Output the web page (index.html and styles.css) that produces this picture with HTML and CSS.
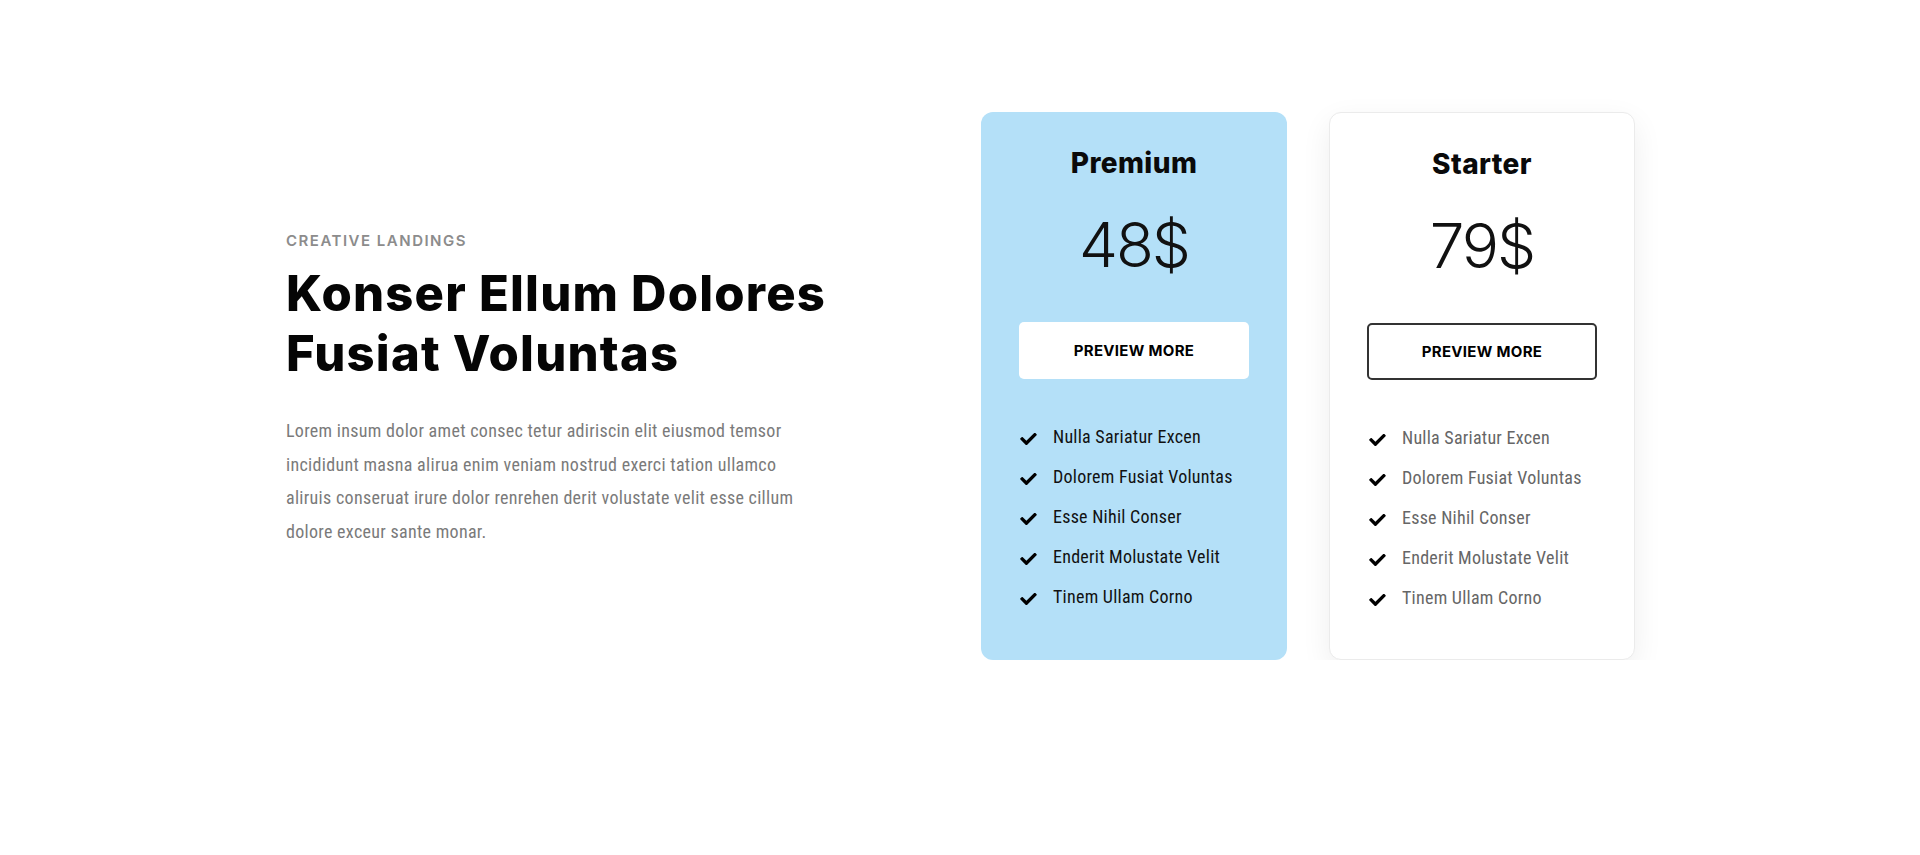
FILE: index.html
```html
<!DOCTYPE html>
<html lang="en">
<head>
<meta charset="utf-8">
<title>Pricing</title>
<link rel="stylesheet" href="styles.css">
</head>
<body>
<section class="pricing">
  <div class="container">
    <div class="intro">
      <div class="eyebrow">CREATIVE LANDINGS</div>
      <h1 class="title">Konser Ellum Dolores<br>Fusiat Voluntas</h1>
      <p class="text">Lorem insum dolor amet consec tetur adiriscin elit eiusmod temsor incididunt masna alirua enim veniam nostrud exerci tation ullamco aliruis conseruat irure dolor renrehen derit volustate velit esse cillum dolore exceur sante monar.</p>
    </div>
    <div class="plans">
      <div class="plan plan-featured">
        <h3 class="plan-name">Premium</h3>
        <div class="plan-price">48$</div>
        <a class="plan-btn" href="#">PREVIEW MORE</a>
        <ul class="plan-list">
          <li><svg class="check" viewBox="0 0 512 370"><path d="M173.9 366.4l-166.4-166.4c-10-10-10-26.2 0-36.2l36.2-36.2c10-10 26.2-10 36.2 0L192 239.7 432.1-.4c10-10 26.2-10 36.2 0l36.2 36.2c10 10 10 26.2 0 36.2l-294.4 294.4c-10 10-26.2 10-36.2 0z"/></svg>Nulla Sariatur Excen</li>
          <li><svg class="check" viewBox="0 0 512 370"><path d="M173.9 366.4l-166.4-166.4c-10-10-10-26.2 0-36.2l36.2-36.2c10-10 26.2-10 36.2 0L192 239.7 432.1-.4c10-10 26.2-10 36.2 0l36.2 36.2c10 10 10 26.2 0 36.2l-294.4 294.4c-10 10-26.2 10-36.2 0z"/></svg>Dolorem Fusiat Voluntas</li>
          <li><svg class="check" viewBox="0 0 512 370"><path d="M173.9 366.4l-166.4-166.4c-10-10-10-26.2 0-36.2l36.2-36.2c10-10 26.2-10 36.2 0L192 239.7 432.1-.4c10-10 26.2-10 36.2 0l36.2 36.2c10 10 10 26.2 0 36.2l-294.4 294.4c-10 10-26.2 10-36.2 0z"/></svg>Esse Nihil Conser</li>
          <li><svg class="check" viewBox="0 0 512 370"><path d="M173.9 366.4l-166.4-166.4c-10-10-10-26.2 0-36.2l36.2-36.2c10-10 26.2-10 36.2 0L192 239.7 432.1-.4c10-10 26.2-10 36.2 0l36.2 36.2c10 10 10 26.2 0 36.2l-294.4 294.4c-10 10-26.2 10-36.2 0z"/></svg>Enderit Molustate Velit</li>
          <li><svg class="check" viewBox="0 0 512 370"><path d="M173.9 366.4l-166.4-166.4c-10-10-10-26.2 0-36.2l36.2-36.2c10-10 26.2-10 36.2 0L192 239.7 432.1-.4c10-10 26.2-10 36.2 0l36.2 36.2c10 10 10 26.2 0 36.2l-294.4 294.4c-10 10-26.2 10-36.2 0z"/></svg>Tinem Ullam Corno</li>
        </ul>
      </div>
      <div class="plan plan-basic">
        <h3 class="plan-name">Starter</h3>
        <div class="plan-price">79$</div>
        <a class="plan-btn" href="#">PREVIEW MORE</a>
        <ul class="plan-list">
          <li><svg class="check" viewBox="0 0 512 370"><path d="M173.9 366.4l-166.4-166.4c-10-10-10-26.2 0-36.2l36.2-36.2c10-10 26.2-10 36.2 0L192 239.7 432.1-.4c10-10 26.2-10 36.2 0l36.2 36.2c10 10 10 26.2 0 36.2l-294.4 294.4c-10 10-26.2 10-36.2 0z"/></svg>Nulla Sariatur Excen</li>
          <li><svg class="check" viewBox="0 0 512 370"><path d="M173.9 366.4l-166.4-166.4c-10-10-10-26.2 0-36.2l36.2-36.2c10-10 26.2-10 36.2 0L192 239.7 432.1-.4c10-10 26.2-10 36.2 0l36.2 36.2c10 10 10 26.2 0 36.2l-294.4 294.4c-10 10-26.2 10-36.2 0z"/></svg>Dolorem Fusiat Voluntas</li>
          <li><svg class="check" viewBox="0 0 512 370"><path d="M173.9 366.4l-166.4-166.4c-10-10-10-26.2 0-36.2l36.2-36.2c10-10 26.2-10 36.2 0L192 239.7 432.1-.4c10-10 26.2-10 36.2 0l36.2 36.2c10 10 10 26.2 0 36.2l-294.4 294.4c-10 10-26.2 10-36.2 0z"/></svg>Esse Nihil Conser</li>
          <li><svg class="check" viewBox="0 0 512 370"><path d="M173.9 366.4l-166.4-166.4c-10-10-10-26.2 0-36.2l36.2-36.2c10-10 26.2-10 36.2 0L192 239.7 432.1-.4c10-10 26.2-10 36.2 0l36.2 36.2c10 10 10 26.2 0 36.2l-294.4 294.4c-10 10-26.2 10-36.2 0z"/></svg>Enderit Molustate Velit</li>
          <li><svg class="check" viewBox="0 0 512 370"><path d="M173.9 366.4l-166.4-166.4c-10-10-10-26.2 0-36.2l36.2-36.2c10-10 26.2-10 36.2 0L192 239.7 432.1-.4c10-10 26.2-10 36.2 0l36.2 36.2c10 10 10 26.2 0 36.2l-294.4 294.4c-10 10-26.2 10-36.2 0z"/></svg>Tinem Ullam Corno</li>
        </ul>
      </div>
    </div>
  </div>
</section>
</body>
</html>
```
FILE: styles.css
```css
* { box-sizing: border-box; }
html, body { margin: 0; padding: 0; background: #fff; }
body { font-family: "Roboto Condensed", "Liberation Sans Narrow", Roboto, sans-serif; color: #111; }

.pricing { padding-top: 112px; }
.container {
  width: 1350px;
  margin: 0 auto;
  display: flex;
  align-items: flex-start;
  justify-content: space-between;
  padding-left: 1px;
}

.intro { width: 600px; padding-top: 117px; }
.eyebrow {
  font-family: Inter, sans-serif;
  font-weight: 600;
  font-size: 15px;
  line-height: 24px;
  letter-spacing: 1.5px;
  color: #8c8c8c;
}
.title {
  margin: 11px 0 0;
  font-family: Inter, sans-serif;
  font-weight: 800;
  font-size: 49px;
  line-height: 60px;
  letter-spacing: 1.2px;
  color: #050505;
}
.text {
  width: 515px;
  margin: 30px 0 0;
  font-size: 18px;
  line-height: 33.5px;
  letter-spacing: 0.3px;
  color: #7a7a7a;
}

.plans { display: flex; gap: 42px; }
.plan {
  width: 306px;
  border-radius: 12px;
  padding: 34px 38px 41px;
  display: flex;
  flex-direction: column;
  align-items: center;
}
.plan-featured { background: #b4e0f8; }
.plan-basic {
  background: #fff;
  border: 1px solid #ebebeb;
  box-shadow: 0 10px 30px rgba(0,0,0,0.07);
}
.plan-name {
  margin: 0;
  font-family: Inter, sans-serif;
  font-weight: 800;
  font-size: 28px;
  line-height: 34px;
  letter-spacing: 0.4px;
  color: #0a0a0a;
}
.plan-price {
  margin-top: 33px;
  font-family: Inter, sans-serif;
  font-weight: 300;
  font-size: 62px;
  line-height: 64px;
  letter-spacing: -2px;
  color: #111;
}
.plan-btn {
  margin-top: 45px;
  width: 230px;
  height: 57px;
  display: flex;
  align-items: center;
  justify-content: center;
  border-radius: 5px;
  font-family: Inter, sans-serif;
  font-weight: 700;
  font-size: 15px;
  letter-spacing: 0.3px;
  color: #000;
  text-decoration: none;
}
.plan-featured .plan-btn { background: #fff; }
.plan-basic .plan-btn { border: 2px solid #333; }

.plan-list {
  list-style: none;
  margin: 38px 0 0;
  padding: 0;
  align-self: stretch;
}
.plan-list li {
  display: flex;
  align-items: center;
  font-size: 18px;
  line-height: 40px;
  letter-spacing: 0.25px;
  padding-left: 1px;
}
.plan-featured .plan-list li { color: #111; }
.plan-basic .plan-list li { color: #666; }
.check {
  width: 17px;
  height: 12px;
  margin-right: 16px;
  margin-top: 4px;
  fill: #000;
  flex-shrink: 0;
}
```
